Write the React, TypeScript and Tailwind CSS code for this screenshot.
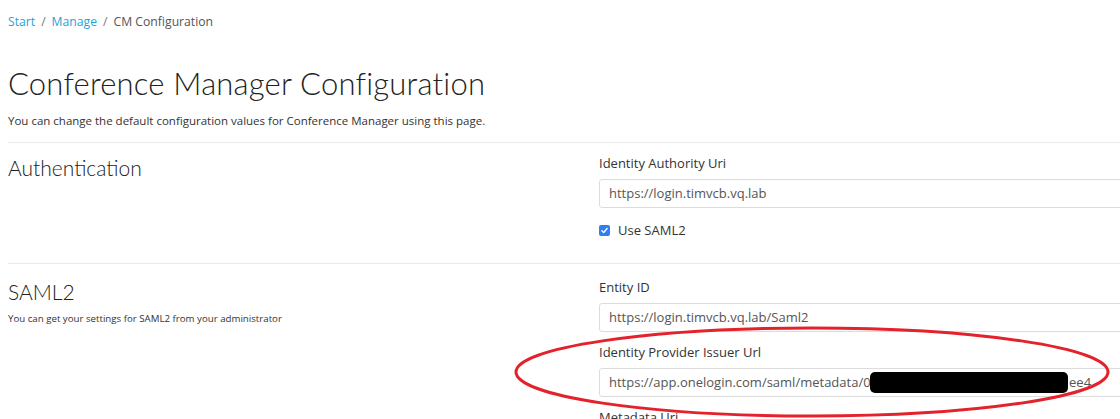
import React from "react";

function Field({ label, children, className = "" }: { label: string; children: React.ReactNode; className?: string }) {
  return (
    <div className={className}>
      <div className="text-[13px] leading-[18px] text-[#333]">{label}</div>
      <div className="mt-[7px] h-[29px] rounded-[3px] border border-[#dcdcdc] bg-white pl-[9px] flex items-center text-[13px] text-[#555] whitespace-nowrap overflow-hidden">
        {children}
      </div>
    </div>
  );
}

export default function App() {
  return (
    <div className="relative w-[1120px] h-[419px] overflow-hidden bg-white font-['Open_Sans',sans-serif] text-[#333]">
      <div className="w-[1320px] px-2">
        {/* Breadcrumb */}
        <div className="pt-[13px] text-[12.2px] leading-[18px] flex items-center gap-[6px]">
          <span className="text-[#1ba3d8]">Start</span>
          <span className="text-[#777]">/</span>
          <span className="text-[#1ba3d8]">Manage</span>
          <span className="text-[#777]">/</span>
          <span className="text-[#555]">CM Configuration</span>
        </div>

        {/* Title */}
        <h1 className="mt-[33px] text-[31px] leading-[38px] font-light font-['Lato',sans-serif] text-[#222] tracking-[0.2px]">
          Conference Manager Configuration
        </h1>
        <p className="mt-[10px] text-[11.5px] leading-[18px] text-[#333]">
          You can change the default configuration values for Conference Manager using this page.
        </p>

        {/* Authentication */}
        <div className="mt-[12px] border-t border-[#eaeaea] grid grid-cols-[591px_600px]">
          <div className="pt-[12px]">
            <h2 className="text-[21px] leading-[25px] font-light font-['Lato',sans-serif] text-[#222]">Authentication</h2>
          </div>
          <div className="pt-[11px] pb-[24px]">
            <Field label="Identity Authority Uri">https://login.timvcb.vq.lab</Field>
            <div className="mt-[13px] flex items-center gap-[8px] text-[13px] leading-[18px]">
              <span className="w-[11px] h-[11px] rounded-[2px] bg-[#2f7ff0] flex items-center justify-center">
                <svg viewBox="0 0 12 12" className="w-[9px] h-[9px]">
                  <path d="M2.5 6.2 L5 8.6 L9.5 3.4" fill="none" stroke="white" strokeWidth="1.8" strokeLinecap="round" strokeLinejoin="round" />
                </svg>
              </span>
              <span>Use SAML2</span>
            </div>
          </div>
        </div>

        {/* SAML2 */}
        <div className="border-t border-[#eaeaea] grid grid-cols-[591px_600px]">
          <div className="pt-[15px]">
            <h2 className="text-[21px] leading-[25px] font-light font-['Lato',sans-serif] text-[#222]">SAML2</h2>
            <p className="mt-[8px] text-[9.7px] leading-[14px] text-[#333]">You can get your settings for SAML2 from your administrator</p>
          </div>
          <div className="pt-[14px]">
            <Field label="Entity ID">https://login.timvcb.vq.lab/Saml2</Field>
            <Field label="Identity Provider Issuer Url" className="mt-[11px]">
              <span>https://app.onelogin.com/saml/metadata/00</span>
              <span className="ml-[-8px] w-[198px] h-[21px] rounded-[5px] bg-black blur-[0.7px]" />
              <span className="ml-[1px]">ee4</span>
            </Field>
            <Field label="Metadata Uri" className="mt-[11px]">
              https://app.onelogin.com/saml/metadata
            </Field>
          </div>
        </div>
      </div>

      {/* Red annotation ellipse */}
      <svg className="absolute left-0 top-0 pointer-events-none" width="1120" height="419" viewBox="0 0 1120 419">
        <ellipse cx="812" cy="372" rx="296" ry="44" fill="none" stroke="#e3222b" strokeWidth="3" />
      </svg>
    </div>
  );
}
